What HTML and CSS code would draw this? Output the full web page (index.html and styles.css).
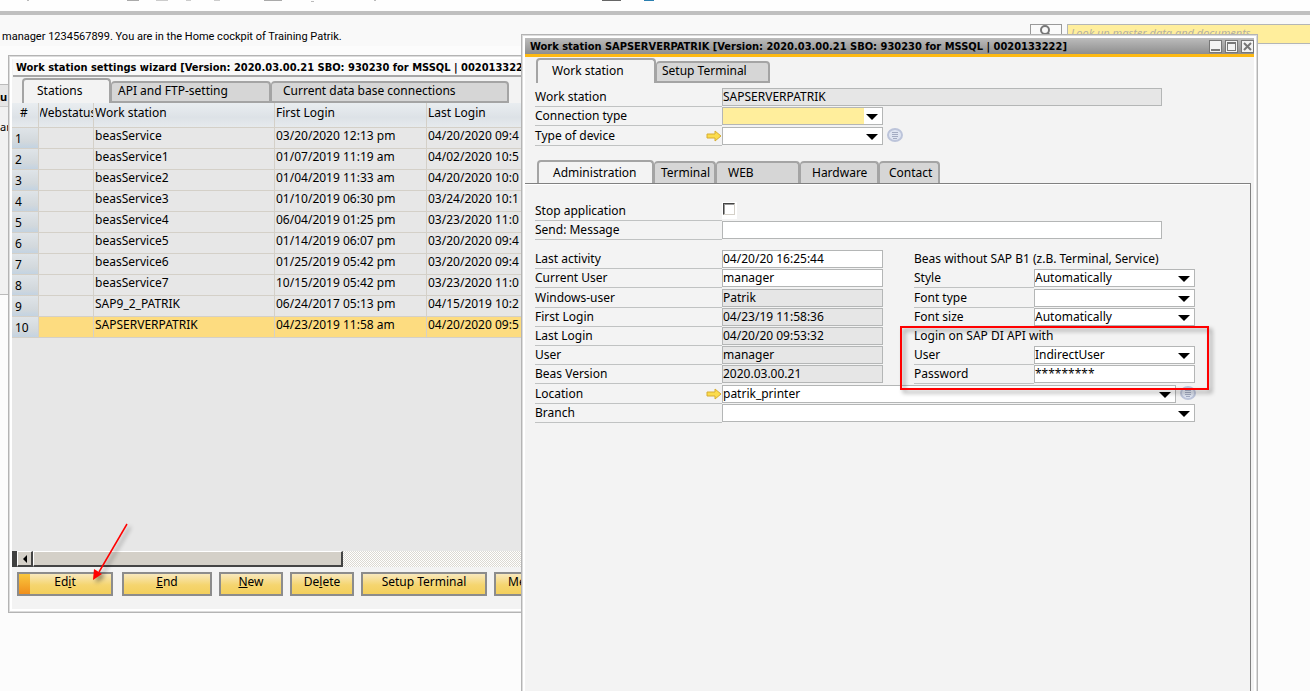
FILE: index.html
```html
<!DOCTYPE html>
<html lang="en">
  <head>
    <meta charset="UTF-8" />
    <meta name="viewport" content="width=device-width, initial-scale=1.0" />
    <title>Work station settings</title>
    <link rel="stylesheet" href="styles.css">
  </head>
  <body>
    <header class="toolbar">
      <svg width="700" height="2" viewBox="0 0 700 2" aria-hidden="true">
        <path d="M27 0h2v1h-2zM311 1h3v1h-3zM374 0h2v1h-2z" fill="#bbb" />
        <path d="M127 0h12v1h-12zM264 0h18v1h-18z" fill="#aaa" />
        <path d="M156 0h12v1h-12zM186 0h5v1h-5zM214 0h6v1h-6z" fill="#ccc" />
        <path d="M602 0h19v1h-19z" fill="#666" />
        <path d="M644 0h10v1h-10z" fill="#2b7fb0" />
      </svg>
    </header>

    <div class="cockpit-bar">
      <p class="cockpit-message">manager 1234567899. You are in the Home cockpit of Training Patrik.</p>
      <form class="search">
        <button type="button" class="search-button" aria-label="Search">
          <svg width="12" height="14" viewBox="0 0 12 14" fill="none" stroke="#777" stroke-width="2">
            <circle cx="5" cy="5" r="4" />
            <path d="M8 8l3 4" />
          </svg>
        </button>
        <input type="text" class="search-input" aria-label="Look up" placeholder="Look up master data and documents" />
      </form>
    </div>

    <aside class="side-panel">
      <h2>u</h2>
      <p>ar</p>
    </aside>

    <section class="window wizard">
      <h1 class="wizard-title">Work station settings wizard [Version: 2020.03.00.21 SBO: 930230 for MSSQL | 0020133222]</h1>

      <nav class="tabs wizard-tabs">
        <button type="button" class="tab active">Stations</button>
        <button type="button" class="tab">API and FTP-setting</button>
        <button type="button" class="tab">Current data base connections</button>
      </nav>

      <div class="grid-area">
        <table class="stations">
          <colgroup>
            <col class="col-number" />
            <col class="col-status" />
            <col class="col-name" />
            <col class="col-date" />
            <col />
          </colgroup>
          <thead>
            <tr>
              <th>#</th>
              <th><div class="clipped">Webstatus</div></th>
              <th>Work station</th>
              <th>First Login</th>
              <th>Last Login</th>
            </tr>
          </thead>
          <tbody>
            <tr><th>1</th><td></td><td>beasService</td><td>03/20/2020 12:13 pm</td><td>04/20/2020 09:4</td></tr>
            <tr><th>2</th><td></td><td>beasService1</td><td>01/07/2019 11:19 am</td><td>04/02/2020 10:5</td></tr>
            <tr><th>3</th><td></td><td>beasService2</td><td>01/04/2019 11:33 am</td><td>04/20/2020 10:0</td></tr>
            <tr><th>4</th><td></td><td>beasService3</td><td>01/10/2019 06:30 pm</td><td>03/24/2020 10:1</td></tr>
            <tr><th>5</th><td></td><td>beasService4</td><td>06/04/2019 01:25 pm</td><td>03/23/2020 11:0</td></tr>
            <tr><th>6</th><td></td><td>beasService5</td><td>01/14/2019 06:07 pm</td><td>03/20/2020 09:4</td></tr>
            <tr><th>7</th><td></td><td>beasService6</td><td>01/25/2019 05:42 pm</td><td>03/20/2020 09:4</td></tr>
            <tr><th>8</th><td></td><td>beasService7</td><td>10/15/2019 05:42 pm</td><td>03/23/2020 11:0</td></tr>
            <tr><th>9</th><td></td><td>SAP9_2_PATRIK</td><td>06/24/2017 05:13 pm</td><td>04/15/2019 10:2</td></tr>
            <tr class="selected"><th>10</th><td></td><td>SAPSERVERPATRIK</td><td>04/23/2019 11:58 am</td><td>04/20/2020 09:5</td></tr>
          </tbody>
        </table>
      </div>

      <div class="scrollbar">
        <button type="button" class="scroll-left" aria-label="Scroll left"></button>
        <div class="scroll-thumb"></div>
      </div>

      <div class="actions">
        <button type="button" class="action default">Ed<u>i</u>t</button>
        <button type="button" class="action end"><u>E</u>nd</button>
        <button type="button" class="action small"><u>N</u>ew</button>
        <button type="button" class="action small">De<u>l</u>ete</button>
        <button type="button" class="action wide">Setup Terminal</button>
        <button type="button" class="action cut">Me</button>
      </div>

      <svg class="arrow-mark" width="50" height="66" viewBox="0 0 50 66" aria-hidden="true">
        <path d="M38 4L10 52" stroke="#f00" stroke-width="1.5" />
        <path d="M4 60L5 49L13 54Z" fill="#f00" />
      </svg>
    </section>

    <section class="window station">
      <div class="titlebar">
        <h1>Work station SAPSERVERPATRIK [Version: 2020.03.00.21 SBO: 930230 for MSSQL | 0020133222]</h1>
        <div class="window-buttons">
          <button type="button" aria-label="Minimize"><svg width="11" height="11" viewBox="0 0 11 11"><path d="M1 8h9v2H1z" fill="#777" /></svg></button>
          <button type="button" aria-label="Maximize"><svg width="11" height="11" viewBox="0 0 11 11"><path d="M1 1h9v9H1zM2 3v6h7V3z" fill="#777" fill-rule="evenodd" /></svg></button>
          <button type="button" aria-label="Close"><svg width="11" height="11" viewBox="0 0 11 11"><path d="M2 2l7 7M9 2l-7 7" stroke="#777" stroke-width="2" /></svg></button>
        </div>
      </div>

      <nav class="tabs station-tabs">
        <button type="button" class="tab active">Work station</button>
        <button type="button" class="tab">Setup Terminal</button>
      </nav>

      <div class="fields head-fields">
        <div class="group">
          <div class="row">
            <label for="workstation">Work station</label>
            <input id="workstation" class="field long readonly" value="SAPSERVERPATRIK" readonly />
          </div>
          <div class="row">
            <label for="connection">Connection type</label>
            <div class="select required"><select id="connection"><option></option></select></div>
          </div>
        </div>
        <div class="row">
          <label for="device">Type of device
            <svg class="link-arrow" width="16" height="12" viewBox="0 0 16 12"><path d="M1 4h8V1l6 5-6 5V8H1z" fill="#fbdc4d" stroke="#d6ac33" /></svg>
          </label>
          <div class="select"><select id="device"><option></option></select></div>
          <svg class="info" width="16" height="14" viewBox="0 0 16 14"><ellipse cx="8" cy="7" rx="7" ry="6" fill="#dfe5f2" stroke="#bcc4da" stroke-width="2" /><path d="M5 4.5h6M5 6.5h6M5 8.5h6M6 10.5h4" stroke="#a3abc2" /></svg>
        </div>
      </div>

      <nav class="tabs detail-tabs">
        <button type="button" class="tab active">Administration</button>
        <button type="button" class="tab">Terminal</button>
        <button type="button" class="tab">WEB</button>
        <button type="button" class="tab">Hardware</button>
        <button type="button" class="tab">Contact</button>
      </nav>

      <div class="panel">
        <div class="fields">
          <div class="row">
            <label for="stop">Stop application</label>
            <span class="check"><input type="checkbox" id="stop" /></span>
          </div>
          <div class="row">
            <label for="message">Send: Message</label>
            <input id="message" class="field long" />
          </div>
        </div>

        <div class="columns">
          <div class="fields">
            <div class="group">
              <div class="row"><label for="activity">Last activity</label><input id="activity" class="field" value="04/20/20 16:25:44" /></div>
              <div class="row"><label for="current">Current User</label><input id="current" class="field" value="manager" /></div>
            </div>
            <div class="group">
              <div class="row"><label for="winuser">Windows-user</label><input id="winuser" class="field readonly" value="Patrik" readonly /></div>
              <div class="row"><label for="first">First Login</label><input id="first" class="field readonly" value="04/23/19 11:58:36" readonly /></div>
              <div class="row"><label for="last">Last Login</label><input id="last" class="field readonly" value="04/20/20 09:53:32" readonly /></div>
              <div class="row"><label for="user">User</label><input id="user" class="field readonly" value="manager" readonly /></div>
              <div class="row"><label for="version">Beas Version</label><input id="version" class="field readonly" value="2020.03.00.21" readonly /></div>
            </div>
          </div>

          <div class="fields side">
            <div class="group">
              <h2 class="row">Beas without SAP B1 (z.B. Terminal, Service)</h2>
              <div class="row"><label for="style">Style</label><div class="select"><select id="style"><option>Automatically</option></select></div></div>
            </div>
            <div class="group">
              <div class="row"><label for="fonttype">Font type</label><div class="select"><select id="fonttype"><option></option></select></div></div>
              <div class="row"><label for="fontsize">Font size</label><div class="select"><select id="fontsize"><option>Automatically</option></select></div></div>
              <h2 class="row">Login on SAP DI API with</h2>
              <div class="row"><label for="diuser">User</label><div class="select"><select id="diuser"><option>IndirectUser</option></select></div></div>
              <div class="row"><label for="password">Password</label><input id="password" class="field" value="*********" /></div>
            </div>
            <div class="highlight"></div>
          </div>
        </div>

        <div class="fields">
          <div class="row">
            <label for="location">Location
              <svg class="link-arrow" width="16" height="12" viewBox="0 0 16 12"><path d="M1 4h8V1l6 5-6 5V8H1z" fill="#fbdc4d" stroke="#d6ac33" /></svg>
            </label>
            <div class="select location"><select id="location"><option>patrik_printer</option></select></div>
            <svg class="info" width="16" height="14" viewBox="0 0 16 14"><ellipse cx="8" cy="7" rx="7" ry="6" fill="#dfe5f2" stroke="#bcc4da" stroke-width="2" /><path d="M5 4.5h6M5 6.5h6M5 8.5h6M6 10.5h4" stroke="#a3abc2" /></svg>
          </div>
          <div class="row">
            <label for="branch">Branch</label>
            <div class="select branch"><select id="branch"><option></option></select></div>
          </div>
        </div>
      </div>
    </section>
  </body>
</html>
```
FILE: styles.css
```css
:root {
  --face: #f3f3f3;
  --line: #c0c2c2;
  --field-line: #b4b6b6;
  --tab-line: #a4a4a4;
  --grid-line: #d4d0c8;
  --readonly: #e6e6e6;
  --required: #ffee9c;
}
* {
  box-sizing: border-box;
}
html,
body {
  height: 100%;
  margin: 0;
}
body {
  position: relative;
  overflow: hidden;
  background: #fcfcfc;
  color: #000;
  font-family: "Noto Sans", "DejaVu Sans", sans-serif;
  font-size: 12px;
  line-height: 16px;
}
button,
input,
select {
  font: inherit;
  color: inherit;
  margin: 0;
  padding: 0;
  border: 0;
  border-radius: 0;
}
h1,
h2,
p {
  margin: 0;
  font-size: 12px;
  font-weight: 400;
}

.toolbar {
  height: 15px;
  background: #fefefe;
  border-bottom: 4px solid #c0c0c0;
}
.toolbar svg {
  display: block;
}
.cockpit-bar {
  display: flex;
  justify-content: space-between;
  height: 31px;
  background: #f9f9f9;
}
.cockpit-message {
  padding: 14px 0 0 2px;
  font-family: Roboto, sans-serif;
  font-size: 11px;
  white-space: nowrap;
}
.search {
  display: flex;
  gap: 5px;
  padding-top: 9px;
}
.search-button {
  width: 32px;
  height: 20px;
  border: 1px solid #999;
  background: #fafafa;
}
.search-input {
  width: 243px;
  height: 20px;
  padding: 0 3px 4px;
  border: 1px solid #b4b6b6;
  border-right: 0;
  background: var(--required);
  font-size: 11px;
  font-style: italic;
}
.search-input::placeholder {
  color: #b4b0a0;
}

.side-panel {
  position: absolute;
  top: 84px;
  left: 0;
  width: 8px;
  height: 211px;
  background: #f1f1f1;
  border: solid #bbb;
  border-width: 1px 0;
}
.side-panel h2 {
  height: 22px;
  padding-top: 4px;
  font-size: 11px;
  font-weight: 700;
  border-bottom: 1px solid #ccc;
  background: #e6e6e6;
}
.side-panel p {
  padding-top: 12px;
  font-size: 11px;
}

.window {
  position: absolute;
  background: var(--face);
  border: 1px solid #b4b4b4;
  box-shadow: inset 0 0 0 1px #dcdcdc, inset 0 0 0 3px #fff;
}

/* Tabs */
.tabs {
  display: flex;
  align-items: flex-end;
}
.tab {
  height: 22px;
  padding: 0 7px 2px;
  border: 2px solid var(--tab-line);
  border-left-width: 1px;
  border-radius: 4px 4px 0 0;
  background: #d6d6d6;
  text-align: left;
  white-space: nowrap;
}
.tab.active {
  height: 25px;
  border-left-width: 2px;
  border-bottom: 0;
  background: var(--face);
}

/* Settings wizard */
.wizard {
  top: 55px;
  left: 8px;
  right: 400px;
  padding: 3px;
}
.wizard-title {
  height: 18px;
  margin-left: 1px;
  padding: 1px 3px 0;
  border-bottom: 2px solid #a8a8a8;
  background: #f9f9f9;
  font-family: "DejaVu Sans Condensed", "DejaVu Sans", sans-serif;
  font-size: 11px;
  font-weight: 700;
  white-space: nowrap;
}
.wizard-tabs {
  height: 26px;
  padding-left: 10px;
}
.wizard-tabs .tab:nth-child(1) {
  width: 89px;
  padding-left: 13px;
}
.wizard-tabs .tab:nth-child(2) {
  width: 160px;
  padding-left: 6px;
}
.wizard-tabs .tab:nth-child(3) {
  width: 238px;
  padding-left: 11px;
}
.grid-area {
  height: 448px;
  background: #e7e7e7;
}
.stations {
  width: 100%;
  table-layout: fixed;
  border-collapse: separate;
  border-spacing: 0;
}
.col-number {
  width: 27px;
}
.col-status {
  width: 55px;
}
.col-name {
  width: 181px;
}
.col-date {
  width: 152px;
}
.stations th,
.stations td {
  height: 21px;
  padding: 0 0 4px 1px;
  border: solid var(--grid-line);
  border-width: 0 1px 1px 0;
  font-weight: 400;
  text-align: left;
  white-space: nowrap;
}
.stations thead th {
  height: 25px;
  background: linear-gradient(#e9edf0, #dde2e7 60%, #e6eaed);
}
.stations thead th:first-child {
  padding-left: 8px;
}
.stations tbody th {
  padding: 1px 0 0 3px;
  background: linear-gradient(#dfe4e8, #d2d8dc 70%, #c3d3e2);
}
.stations .selected td {
  background: #fddc80;
}
.clipped {
  display: flex;
  justify-content: center;
  overflow: hidden;
}
.scrollbar {
  display: flex;
  height: 16px;
  padding-left: 5px;
  background: repeating-conic-gradient(#dcd9d2 0 25%, #fff 0 50%) 0 0 / 2px 2px;
  box-shadow: inset 5px 0 0 #404040;
}
.scroll-left,
.scroll-thumb {
  background: #d4d0c8;
  border: 1px solid #fff;
  border-right: 2px solid #444;
  border-bottom: 2px solid #444;
}
.scroll-left {
  display: flex;
  align-items: center;
  justify-content: center;
  width: 16px;
}
.scroll-left::before {
  content: "";
  border: 4px solid transparent;
  border-right-color: #000;
  border-left: 0;
}
.scroll-thumb {
  width: 310px;
}
.actions {
  display: flex;
  gap: 7px;
  padding: 5px 5px 13px;
}
.action {
  width: 90px;
  height: 24px;
  padding-bottom: 4px;
  border: 2px solid #8c8c8c;
  background: linear-gradient(#f8e8bd, #f5d56f 55%, #f3cf5c);
}
.action.default {
  width: 96px;
  background: linear-gradient(#f9c73e, #f08f1c) 0 0 / 11px 100% no-repeat,
    linear-gradient(#f8e8bd, #f5d56f 55%, #f3cf5c);
}
.action.end {
  margin-left: 2px;
}
.action.small {
  width: 64px;
}
.action.wide {
  width: 126px;
}
.action.cut {
  padding-left: 12px;
  text-align: left;
}
.arrow-mark {
  position: absolute;
  left: 80px;
  top: 464px;
  filter: drop-shadow(3px 3px 2px rgba(0, 0, 0, 0.4));
}

/* Work station window */
.station {
  top: 34px;
  left: 521px;
  right: 52px;
  bottom: -10px;
  display: flex;
  flex-direction: column;
  padding: 3px;
}
.titlebar {
  display: flex;
  justify-content: space-between;
  align-items: center;
  height: 19px;
  padding: 0 0 0 5px;
  border-bottom: 3px solid #fdb913;
  background: linear-gradient(#bcbcbc, #8e8e8e);
}
.titlebar h1 {
  padding-top: 2px;
  font-family: "DejaVu Sans Condensed", "DejaVu Sans", sans-serif;
  font-size: 11px;
  font-weight: 700;
  white-space: nowrap;
}
.window-buttons {
  display: flex;
  gap: 3px;
}
.window-buttons button {
  width: 13px;
  height: 13px;
  border: 1px solid #777;
  background: #f3f3f3;
}
.window-buttons svg {
  display: block;
}
.station-tabs {
  height: 25px;
  padding-left: 11px;
  margin-top: 1px;
}
.station-tabs .tab:nth-child(1) {
  width: 120px;
  padding-left: 14px;
}
.station-tabs .tab:nth-child(2) {
  width: 114px;
  padding-left: 5px;
}
.fields {
  padding-left: 10px;
}
.group {
  margin-bottom: 1px;
}
.row {
  display: flex;
  height: 19px;
}
.row label {
  display: flex;
  flex: none;
  justify-content: space-between;
  align-items: center;
  width: 187px;
  border-bottom: 1px solid var(--line);
}
.field,
.select {
  flex: none;
  width: 161px;
  height: 18px;
  border: 1px solid var(--field-line);
  background: #fff;
}
.field {
  padding-bottom: 1px;
}
.field.long {
  width: 440px;
}
.field.readonly {
  background: var(--readonly);
}
.select {
  position: relative;
}
.select select {
  display: block;
  width: 100%;
  height: 16px;
  padding-bottom: 1px;
  appearance: none;
  background: transparent;
}
.select.required {
  background: linear-gradient(to left, #fff 18px, var(--required) 0);
}
.select::after {
  content: "";
  position: absolute;
  right: 4px;
  top: 6px;
  border: 6px solid transparent;
  border-top-color: #000;
  border-bottom: 0;
  pointer-events: none;
}
.info {
  margin: 1px 4px;
}
.head-fields {
  margin-top: 5px;
}
.detail-tabs {
  height: 23px;
  margin-top: 14px;
  padding-left: 12px;
}
.detail-tabs .tab {
  padding-bottom: 0;
  padding-left: 11px;
  border-bottom: 0;
}
.detail-tabs .tab:nth-child(1) {
  width: 117px;
  height: 23px;
  padding-left: 14px;
}
.detail-tabs .tab:nth-child(2) {
  width: 62px;
  padding-left: 6px;
}
.detail-tabs .tab:nth-child(3) {
  width: 84px;
}
.detail-tabs .tab:nth-child(4) {
  width: 79px;
}
.detail-tabs .tab:nth-child(5) {
  width: 61px;
  padding-left: 9px;
}
.panel {
  flex: 1;
  margin-right: 3px;
  padding-top: 18px;
  border: solid #808080;
  border-width: 1px 1px 0 0;
  box-shadow: inset 0 1px 0 #fff;
}
.check {
  width: 15px;
  height: 17px;
  background: #fff;
}
.check input {
  display: block;
  width: 12px;
  height: 12px;
  margin: 1px;
  appearance: none;
  border: 1px solid #d4d0c8;
  border-top-color: #444;
  border-left-color: #444;
  background: #fff;
  box-shadow: inset 1px 1px 0 #999;
}
.columns {
  display: flex;
  gap: 21px;
  margin-top: 10px;
}
.side {
  position: relative;
  z-index: 1;
}
.side .row label {
  width: 120px;
}
h2.row {
  align-items: center;
  padding-bottom: 2px;
}
.select.location {
  width: 454px;
}
.select.branch {
  width: 473px;
}
.highlight {
  position: absolute;
  top: 76px;
  left: -4px;
  right: -14px;
  height: 64px;
  border: 2px solid #f00;
  filter: drop-shadow(3px 3px 2px rgba(0, 0, 0, 0.4));
  pointer-events: none;
}
```
